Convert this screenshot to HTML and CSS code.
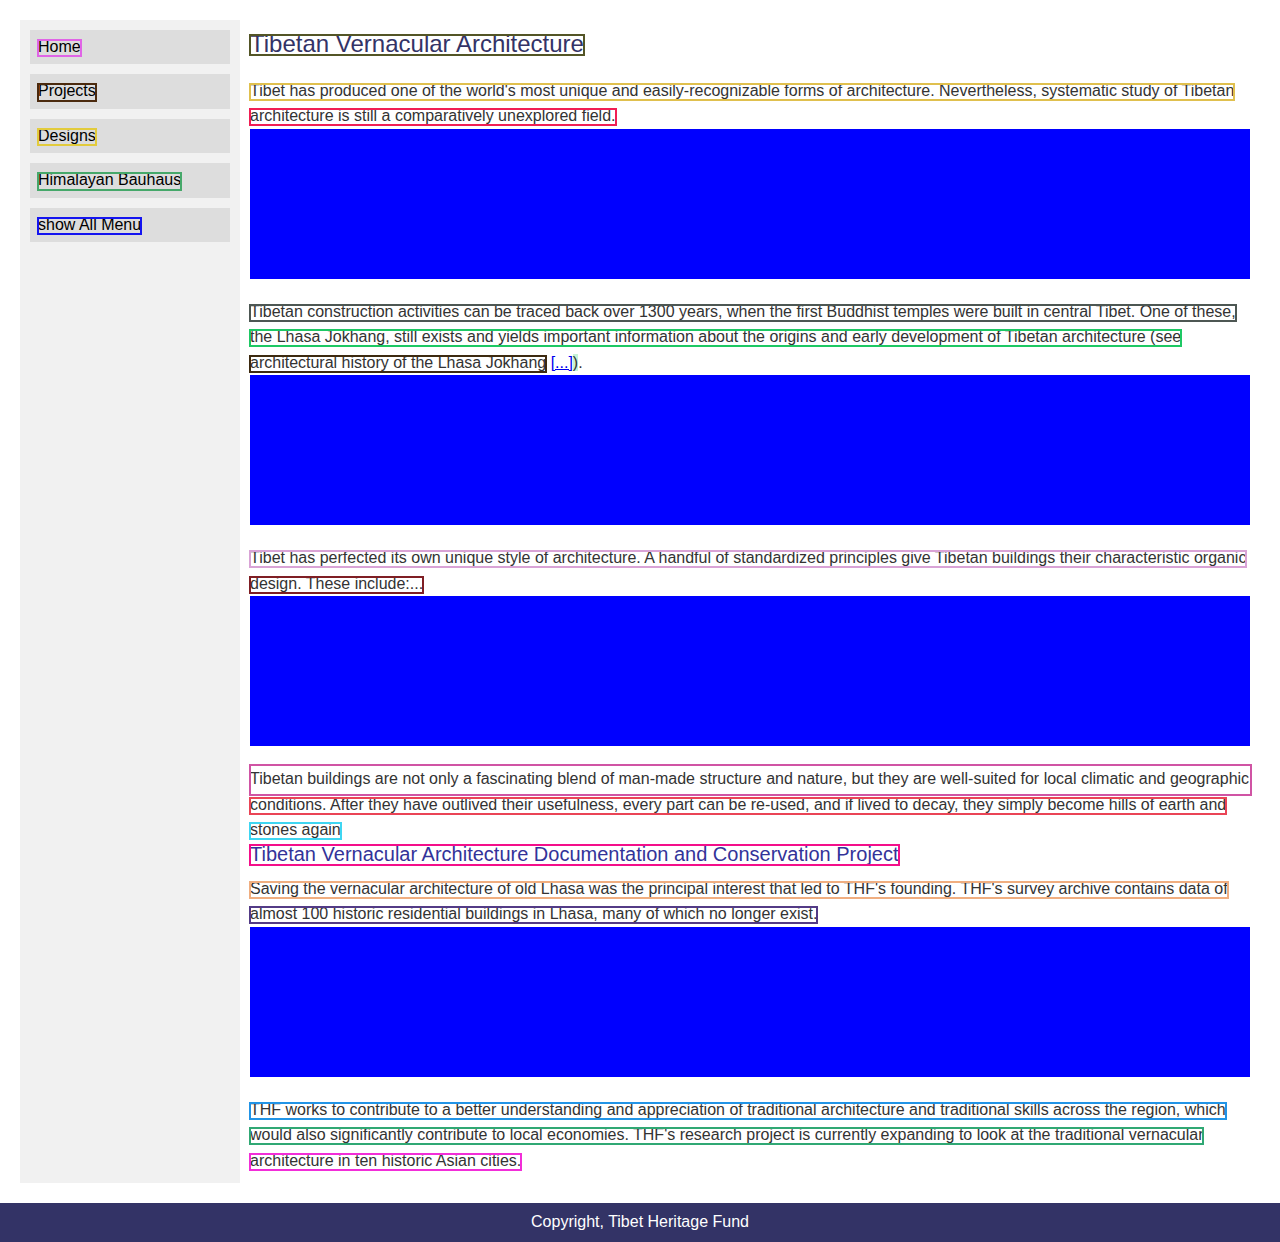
FILE: index.html
```html
<!DOCTYPE html>
<html lang="en">
<head>
<meta charset="utf-8">
<title>Tibetan Vernacular Architecture</title>
<link rel="stylesheet" href="styles.css">
</head>
<body>
<div class="page">
  <aside class="sidebar">
    <nav class="menu">
      <a class="menu-item" href="#"><span class="ln c-home">Home</span></a>
      <a class="menu-item" href="#"><span class="ln c-projects">Projects</span></a>
      <a class="menu-item" href="#"><span class="ln c-designs">Designs</span></a>
      <a class="menu-item" href="#"><span class="ln c-bauhaus">Himalayan Bauhaus</span></a>
      <a class="menu-item" href="#"><span class="ln c-showall">show All Menu</span></a>
    </nav>
  </aside>
  <main class="content">
    <h1 class="title"><span class="ln heading-ln c-h1">Tibetan Vernacular Architecture</span></h1>
    <p class="text"><span class="ln c-gold">Tibet has produced one of the world's most unique and easily-recognizable forms of architecture. Nevertheless, systematic study of Tibetan</span><br><span class="ln c-crimson">architecture is still a comparatively unexplored field.</span></p>
    <div class="picture"></div>
    <p class="text"><span class="ln c-slate">Tibetan construction activities can be traced back over 1300 years, when the first Buddhist temples were built in central Tibet. One of these,</span><br><span class="ln c-green">the Lhasa Jokhang, still exists and yields important information about the origins and early development of Tibetan architecture (see</span><br><span class="ln c-brown">architectural history of the Lhasa Jokhang</span> <a class="more" href="#">[...]</a><span class="mark">)</span>.</p>
    <div class="picture"></div>
    <p class="text"><span class="ln c-lilac">Tibet has perfected its own unique style of architecture. A handful of standardized principles give Tibetan buildings their characteristic organic</span><br><span class="ln c-maroon">design. These include:...</span></p>
    <div class="picture"></div>
    <p class="text"><span class="ln c-pink tall">Tibetan buildings are not only a fascinating blend of man-made structure and nature, but they are well-suited for local climatic and geographic</span><br><span class="ln c-red">conditions. After they have outlived their usefulness, every part can be re-used, and if lived to decay, they simply become hills of earth and</span><br><span class="ln c-cyan">stones again</span></p>
    <h2 class="subtitle"><span class="ln c-hot">Tibetan Vernacular Architecture Documentation and Conservation Project</span></h2>
    <p class="text"><span class="ln c-peach">Saving the vernacular architecture of old Lhasa was the principal interest that led to THF's founding. THF's survey archive contains data of</span><br><span class="ln c-purple">almost 100 historic residential buildings in Lhasa, many of which no longer exist.</span></p>
    <div class="picture"></div>
    <p class="text"><span class="ln c-sky">THF works to contribute to a better understanding and appreciation of traditional architecture and traditional skills across the region, which</span><br><span class="ln c-teal">would also significantly contribute to local economies. THF's research project is currently expanding to look at the traditional vernacular</span><br><span class="ln c-magenta">architecture in ten historic Asian cities.</span></p>
  </main>
</div>
<footer class="footer">Copyright, Tibet Heritage Fund</footer>
</body>
</html>
```

FILE: styles.css
```css
html, body {
  margin: 0;
  padding: 0;
  background: #ffffff;
}

body {
  font-family: "Liberation Sans", Arial, sans-serif;
  font-size: 16px;
  color: #333333;
}

.page {
  display: flex;
  align-items: stretch;
  padding: 20px;
}

.sidebar {
  width: 200px;
  flex: 0 0 200px;
  padding: 10px;
  background: #f1f1f1;
}

.menu {
  display: flex;
  flex-direction: column;
  gap: 10px;
}

.menu-item {
  display: block;
  padding: 8px;
  background: #dddddd;
  color: #000000;
  text-decoration: none;
  line-height: 18.4px;
}

.content {
  flex: 1;
  min-width: 0;
  padding: 10px;
}

.title {
  margin: 0 0 20px;
  font-size: 24px;
  font-weight: normal;
  line-height: 27.6px;
  color: #333366;
}

.subtitle {
  margin: 0 0 10px;
  font-size: 20px;
  font-weight: normal;
  line-height: 23px;
  color: #333399;
}

.text {
  margin: 0;
  line-height: 25.5px;
}

.picture {
  height: 150px;
  background: #0000ff;
  margin-bottom: 20px;
}

.more {
  color: #0000ee;
  text-decoration: underline;
}

.mark {
  background: #c6f3d6;
}

/* per-line outline boxes */
.ln {
  display: inline-block;
  white-space: nowrap;
  line-height: 0.9em;
  padding-bottom: 0.12em;
  vertical-align: baseline;
  outline: 2px solid transparent;
  outline-offset: -1px;
}

.ln.heading-ln {
  line-height: 18px;
  padding-bottom: 2px;
}

.ln.tall {
  padding-top: 7px;
  padding-bottom: 8px;
  margin-top: -7px;
  margin-bottom: -8px;
  padding-right: 2px;
}

.c-home { outline-color: #e064e6; }
.c-projects { outline-color: #4b2a0e; }
.c-designs { outline-color: #e2cb3c; }
.c-bauhaus { outline-color: #46a86a; }
.c-showall { outline-color: #1414f0; }
.c-h1 { outline-color: #535526; }
.c-gold { outline-color: #e0c04e; }
.c-crimson { outline-color: #f01e54; }
.c-slate { outline-color: #4d5753; }
.c-green { outline-color: #1ec864; }
.c-brown { outline-color: #3d2a10; }
.c-lilac { outline-color: #d9a3d6; }
.c-maroon { outline-color: #7f1e24; }
.c-pink { outline-color: #d054a4; }
.c-red { outline-color: #ea4456; }
.c-cyan { outline-color: #3fd6f2; }
.c-hot { outline-color: #f40e8a; }
.c-peach { outline-color: #f0ae80; }
.c-purple { outline-color: #533b86; }
.c-sky { outline-color: #2294e6; }
.c-teal { outline-color: #30a874; }
.c-magenta { outline-color: #f22ed8; }

.footer {
  background: #333366;
  color: #ffffff;
  text-align: center;
  padding: 10px;
  line-height: 18.4px;
}
```
